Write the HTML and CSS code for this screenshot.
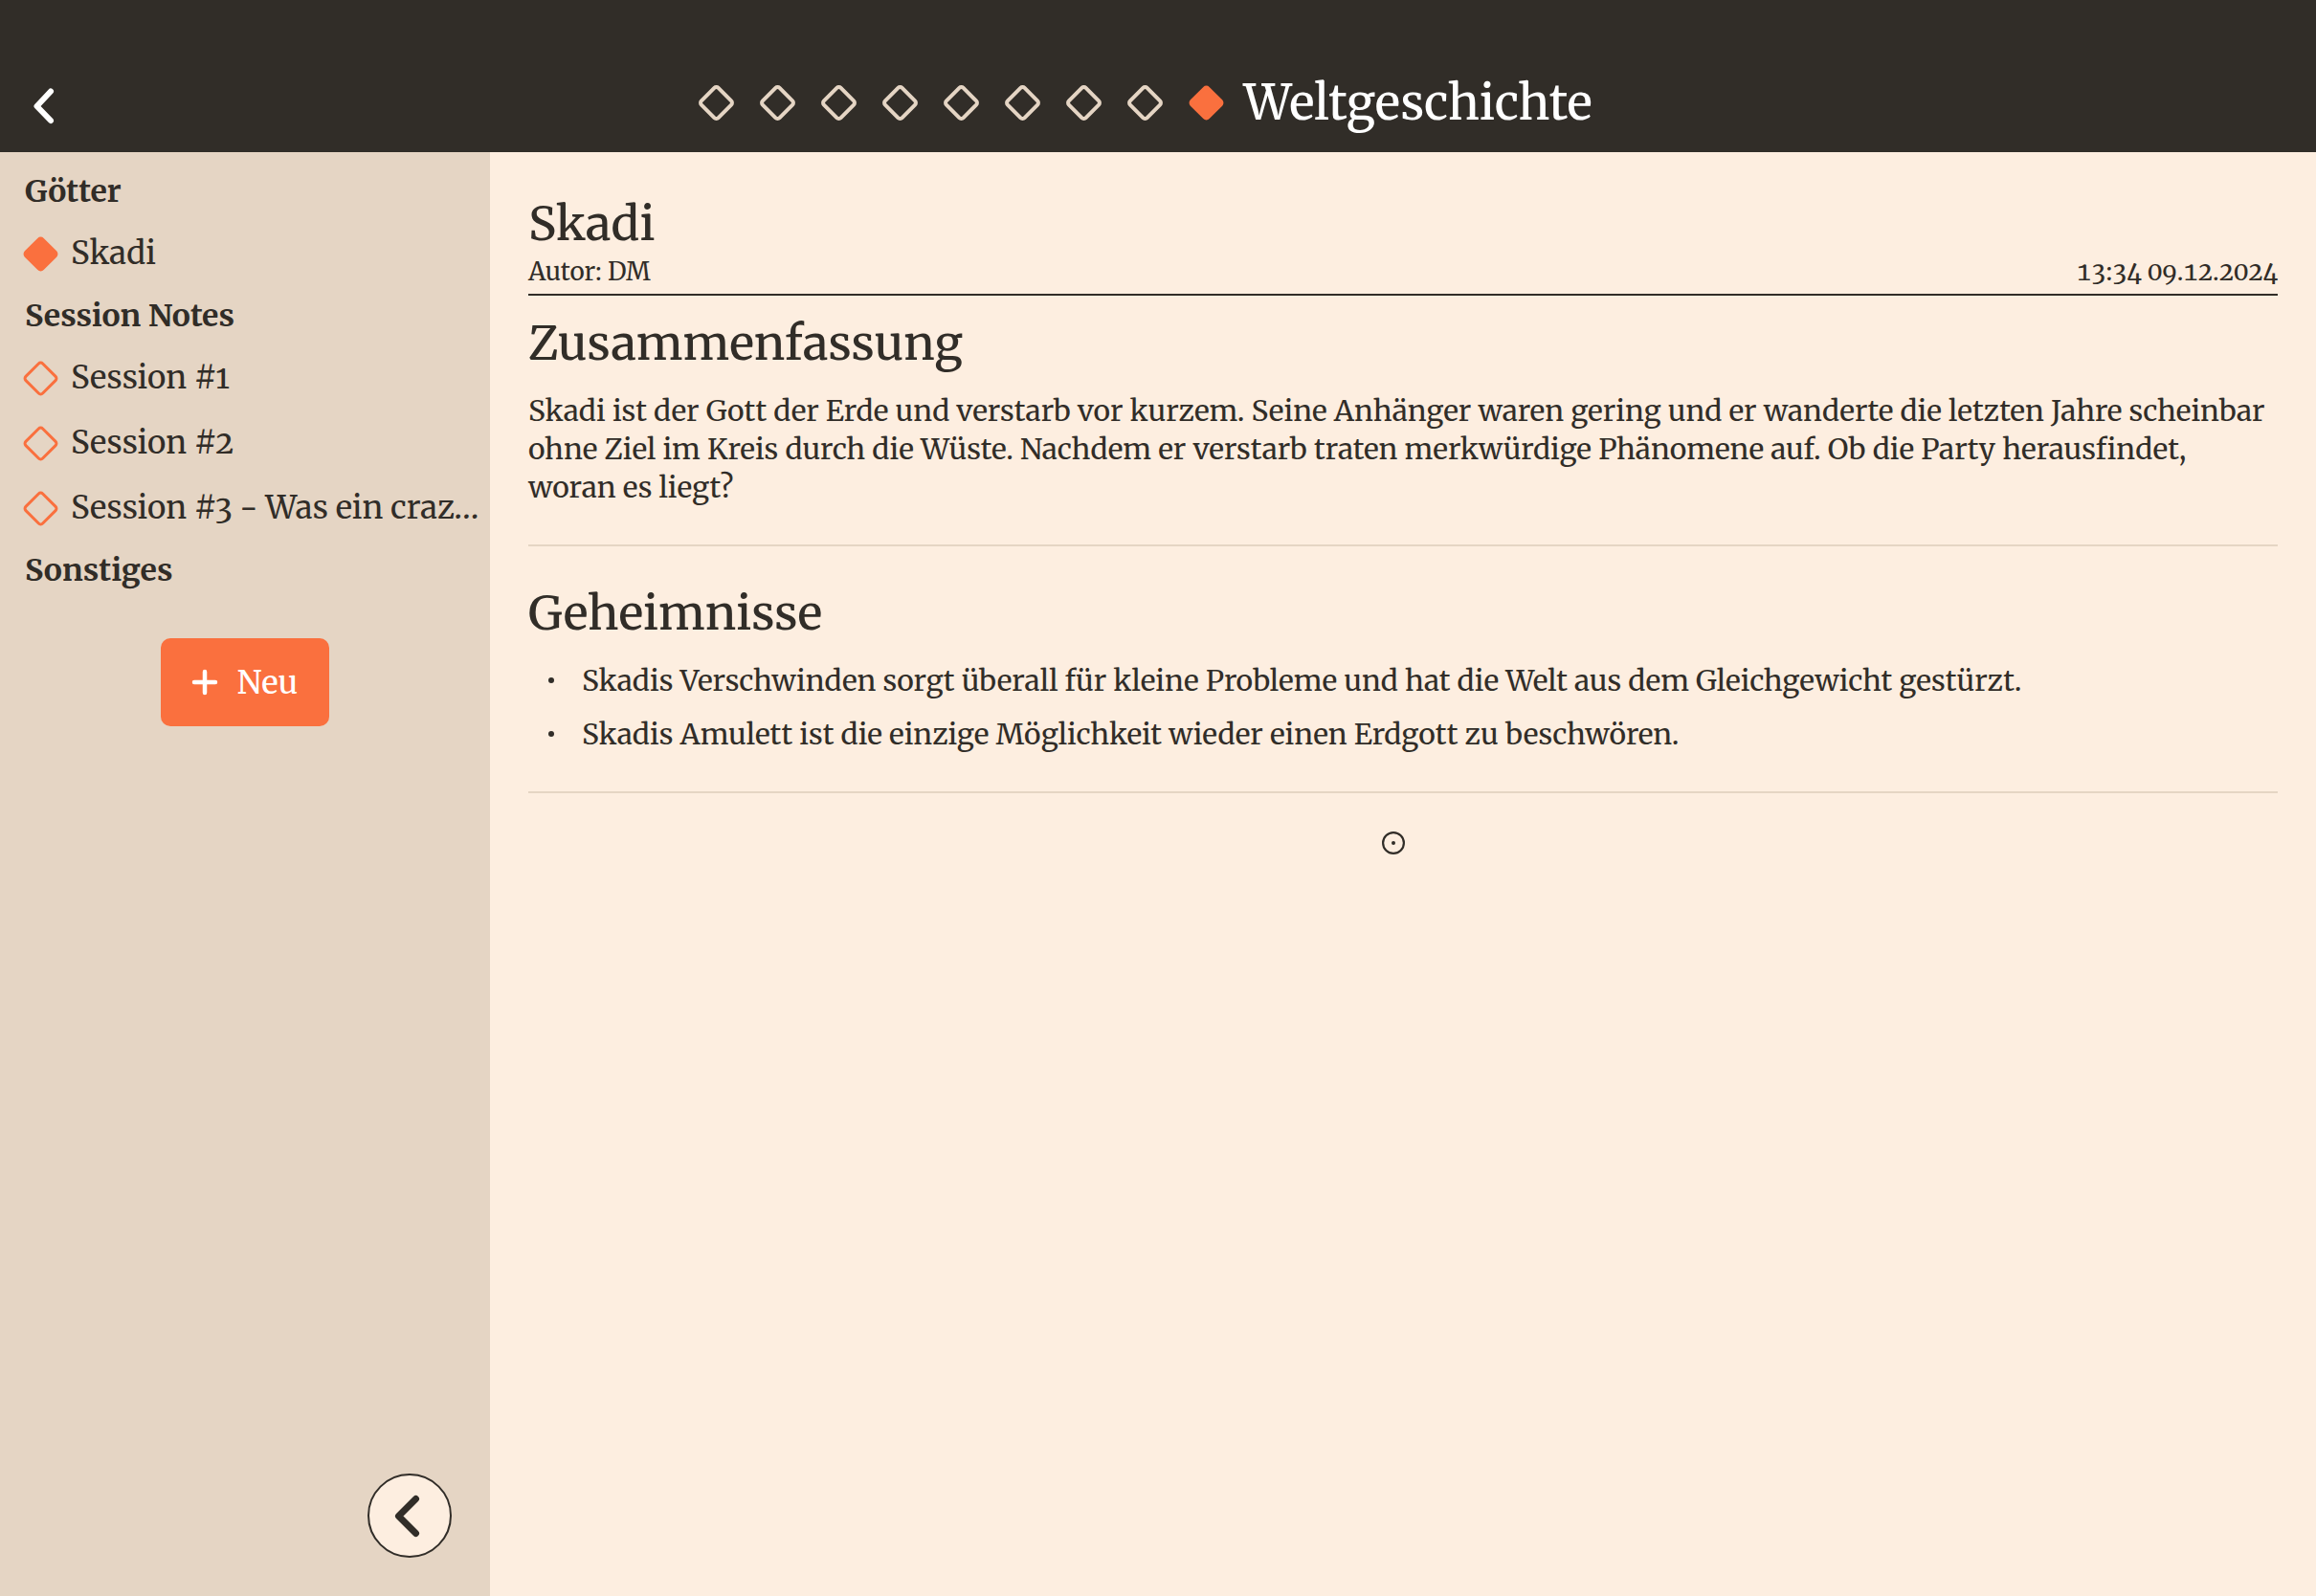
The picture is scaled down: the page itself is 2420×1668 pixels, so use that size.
FILE: index.html
```html
<!DOCTYPE html>
<html lang="de">
<head>
  <meta charset="utf-8">
  <meta name="viewport" content="width=device-width, initial-scale=1">
  <title>Weltgeschichte</title>
  <link rel="stylesheet" href="styles.css">
</head>
<body>
  <svg class="sprite" aria-hidden="true">
    <symbol id="diamond" viewBox="0 0 37 37">
      <rect x="6" y="6" width="25" height="25" rx="3" transform="rotate(45 18.500 18.500)"/>
    </symbol>
  </svg>

  <header class="topbar">
    <button class="back" type="button" aria-label="Zurück">
      <svg width="88" height="103" viewBox="0 0 88 103"><path d="M53 39.500 38.500 55 53 70" stroke-width="6"/></svg>
    </button>
    <div class="topbar-center">
      <nav class="steps">
        <button class="step" type="button" aria-label="Seite 1"><svg class="diamond"><use href="#diamond"/></svg></button>
        <button class="step" type="button" aria-label="Seite 2"><svg class="diamond"><use href="#diamond"/></svg></button>
        <button class="step" type="button" aria-label="Seite 3"><svg class="diamond"><use href="#diamond"/></svg></button>
        <button class="step" type="button" aria-label="Seite 4"><svg class="diamond"><use href="#diamond"/></svg></button>
        <button class="step" type="button" aria-label="Seite 5"><svg class="diamond"><use href="#diamond"/></svg></button>
        <button class="step" type="button" aria-label="Seite 6"><svg class="diamond"><use href="#diamond"/></svg></button>
        <button class="step" type="button" aria-label="Seite 7"><svg class="diamond"><use href="#diamond"/></svg></button>
        <button class="step" type="button" aria-label="Seite 8"><svg class="diamond"><use href="#diamond"/></svg></button>
        <button class="step" type="button" aria-label="Seite 9"><svg class="diamond filled"><use href="#diamond"/></svg></button>
      </nav>
      <span class="topbar-title">Weltgeschichte</span>
    </div>
  </header>

  <div class="layout">
    <aside class="sidebar">
      <nav class="tree">
        <h2 class="group">Götter</h2>
        <a class="entry" href="#skadi"><svg class="diamond filled"><use href="#diamond"/></svg><span class="entry-label">Skadi</span></a>
        <h2 class="group">Session Notes</h2>
        <a class="entry" href="#session-1"><svg class="diamond"><use href="#diamond"/></svg><span class="entry-label">Session #1</span></a>
        <a class="entry" href="#session-2"><svg class="diamond"><use href="#diamond"/></svg><span class="entry-label">Session #2</span></a>
        <a class="entry" href="#session-3"><svg class="diamond"><use href="#diamond"/></svg><span class="entry-label">Session #3 - Was ein craz…</span></a>
        <h2 class="group">Sonstiges</h2>
      </nav>
      <button class="new" type="button">
        <svg width="40" height="40" viewBox="0 0 40 40"><path d="M20 9v22M9 20h22" stroke-width="4.500"/></svg>
        Neu
      </button>
      <button class="collapse" type="button" aria-label="Seitenleiste einklappen">
        <svg width="84" height="84" viewBox="2 2 84 84"><path d="M50.500 26.500 32.500 44.500 50.500 62.500" stroke-width="7"/></svg>
      </button>
    </aside>

    <main class="document" id="skadi">
      <header class="document-head">
        <h1 class="heading">Skadi</h1>
        <div class="meta"><span>Autor: DM</span><time datetime="2024-12-09T13:34">13:34 09.12.2024</time></div>
      </header>
      <section class="section">
        <h2 class="heading">Zusammenfassung</h2>
        <p class="text">Skadi ist der Gott der Erde und verstarb vor kurzem. Seine Anhänger waren gering und er wanderte die letzten Jahre scheinbar ohne Ziel im Kreis durch die Wüste. Nachdem er verstarb traten merkwürdige Phänomene auf. Ob die Party herausfindet, woran es liegt?</p>
      </section>
      <section class="section">
        <h2 class="heading">Geheimnisse</h2>
        <ul class="list">
          <li class="text">Skadis Verschwinden sorgt überall für kleine Probleme und hat die Welt aus dem Gleichgewicht gestürzt.</li>
          <li class="text">Skadis Amulett ist die einzige Möglichkeit wieder einen Erdgott zu beschwören.</li>
        </ul>
      </section>
    </main>
  </div>

  <svg class="pointer" width="24" height="24" viewBox="0 0 24 24" aria-hidden="true">
    <circle cx="12" cy="12" r="10.900" fill="none" stroke="currentColor" stroke-width="2.200"/>
    <circle cx="12" cy="12" r="2" fill="currentColor"/>
  </svg>
</body>
</html>
```
FILE: styles.css
```css
:root {
  --ink: #312d28;
  --sand: #e5d5c4;
  --paper: #fdeee0;
  --accent: #fa703e;
}

* { box-sizing: border-box; margin: 0; padding: 0; }

body {
  display: flex;
  flex-direction: column;
  position: relative;
  min-height: 100vh;
  background: var(--paper);
  color: var(--ink);
  font-family: Merriweather, "DejaVu Serif", serif;
  font-variant-numeric: oldstyle-nums;
}

button {
  border: 0;
  background: none;
  color: inherit;
  font: inherit;
  cursor: pointer;
}

svg { display: block; flex: none; }

.sprite { position: absolute; width: 0; height: 0; }

.diamond {
  width: 37px;
  height: 37px;
  fill: none;
  stroke: var(--accent);
  stroke-width: 3px;
}
.diamond.filled { fill: var(--accent); }

.back path, .new path, .collapse path {
  fill: none;
  stroke: currentColor;
  stroke-linecap: round;
  stroke-linejoin: round;
}

/* Top bar */
.topbar {
  display: grid;
  grid-template-columns: 88px 1fr 128px;
  align-items: center;
  padding-top: 56px;
  background: var(--ink);
  color: #fff;
}

.topbar-center {
  display: flex;
  align-items: center;
  justify-content: center;
  gap: 7px;
}

.steps { display: flex; }

.step {
  display: flex;
  justify-content: center;
  width: 64px;
}
.step .diamond:not(.filled) { stroke: var(--sand); stroke-width: 4px; }

.topbar-title {
  font-size: 50px;
  font-weight: 500;
  line-height: 60px;
  white-space: nowrap;
}

/* Sidebar */
.layout { display: flex; flex: 1; }

.sidebar {
  display: flex;
  flex: none;
  flex-direction: column;
  align-items: center;
  width: 512px;
  padding: 10px 0 40px;
  background: var(--sand);
}

.tree { width: 100%; padding: 0 8px 0 24px; }

.group { padding-left: 2px; font-size: 32px; line-height: 62px; }

.entry {
  display: flex;
  align-items: center;
  gap: 13px;
  color: inherit;
  font-size: 33px;
  line-height: 68px;
  text-decoration: none;
}

.entry-label { white-space: nowrap; }

.new {
  display: flex;
  align-items: center;
  gap: 14px;
  height: 92px;
  margin-top: 40px;
  padding: 0 33px 0 26px;
  border-radius: 10px;
  background: var(--accent);
  color: #fff;
  font-size: 33px;
  font-weight: 500;
}

.collapse {
  align-self: flex-end;
  margin: auto 40px 0 0;
  border: 2px solid var(--ink);
  border-radius: 50%;
  background: var(--paper);
}

/* Document */
.document { flex: 1; min-width: 0; padding: 45px 40px; }

.heading { font-size: 49px; font-weight: 500; line-height: 60px; }

.document-head { margin-bottom: 20px; border-bottom: 2px solid var(--ink); }

.meta {
  display: flex;
  justify-content: space-between;
  padding: 4px 0 7px;
  font-size: 26px;
  line-height: 32px;
}

.meta time { font-variant-numeric: oldstyle-nums tabular-nums; }

.section {
  display: grid;
  gap: 20px;
  margin-bottom: 40px;
  padding-bottom: 40px;
  border-bottom: 2px solid var(--sand);
}

.text { font-size: 30px; line-height: 40px; }

.list { display: grid; gap: 16px; list-style: none; }

.list .text {
  display: grid;
  grid-template-columns: 48px 1fr;
  gap: 8px;
  align-items: center;
}

.list .text::before {
  content: "";
  justify-self: center;
  width: 6px;
  height: 6px;
  border-radius: 50%;
  background: var(--ink);
}

/* Pointer marker floating over the page */
.pointer { position: absolute; top: 869px; left: 1444px; }
```
